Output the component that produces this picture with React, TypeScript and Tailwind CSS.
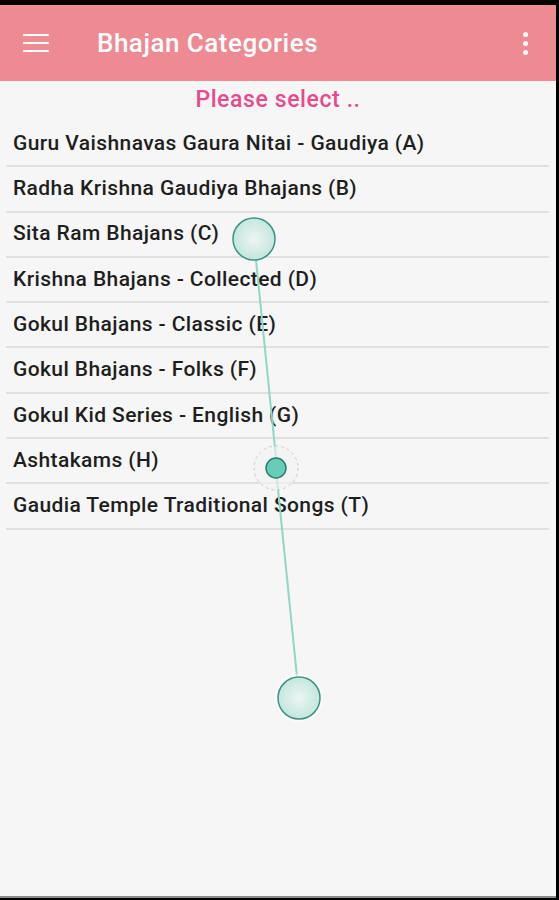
const categories = [
  "Guru Vaishnavas Gaura Nitai - Gaudiya (A)",
  "Radha Krishna Gaudiya Bhajans (B)",
  "Sita Ram Bhajans (C)",
  "Krishna Bhajans - Collected (D)",
  "Gokul Bhajans - Classic (E)",
  "Gokul Bhajans - Folks (F)",
  "Gokul Kid Series - English (G)",
  "Ashtakams (H)",
  "Gaudia Temple Traditional Songs (T)",
];

// touch trail drawn over the list (screen recording overlay)
function TouchTrail() {
  return (
    <svg className="absolute inset-0 pointer-events-none" width="559" height="900" viewBox="0 0 559 900">
      <defs>
        <radialGradient id="tap" cx="50%" cy="50%" r="50%">
          <stop offset="0%" stopColor="#eef5f3" />
          <stop offset="100%" stopColor="#c4e6de" />
        </radialGradient>
      </defs>
      <line x1="256" y1="260" x2="276" y2="458" stroke="#8fd6c6" strokeWidth="2" />
      <line x1="277" y1="479" x2="297" y2="677" stroke="#8fd6c6" strokeWidth="2" />
      <circle cx="254" cy="239" r="21" fill="url(#tap)" stroke="#3d9383" strokeWidth="1.5" />
      <circle cx="276" cy="468" r="22" fill="#f1f3f2" fillOpacity="0.6" stroke="#c8cccb" strokeWidth="1" strokeDasharray="3 3" />
      <circle cx="276" cy="468" r="10" fill="#67cdb9" stroke="#2d7d6d" strokeWidth="1.5" />
      <circle cx="299" cy="698" r="24" fill="#ffffff" fillOpacity="0.6" />
      <circle cx="299" cy="698" r="21" fill="url(#tap)" stroke="#3d9383" strokeWidth="1.5" />
    </svg>
  );
}

export default function App() {
  return (
    <div className="relative w-[559px] h-[900px] bg-black overflow-hidden" style={{ fontFamily: "Roboto, 'Noto Sans', sans-serif" }}>
      <div className="w-[556px] h-[893px] mt-[5px] bg-[#f6f6f6] border-b-2 border-[#8a8a8a]">
        <header className="h-[76px] bg-[#ee8a92] flex items-center text-white">
          <div className="ml-[23px] w-[26px] flex flex-col gap-[5.5px]">
            <span className="h-[2.5px] bg-white rounded-sm" />
            <span className="h-[2.5px] bg-white rounded-sm" />
            <span className="h-[2.5px] bg-white rounded-sm" />
          </div>
          <h1 className="ml-[48px] text-[26px] font-medium tracking-[0.5px] leading-none">Bhajan Categories</h1>
          <div className="ml-auto mr-[28px] flex flex-col gap-[4px] items-center">
            <span className="w-[5px] h-[5px] rounded-full bg-white" />
            <span className="w-[5px] h-[5px] rounded-full bg-white" />
            <span className="w-[5px] h-[5px] rounded-full bg-white" />
          </div>
        </header>
        <p className="text-center text-[#e94a8c] text-[23px] font-medium tracking-[0.6px] mt-[4px] leading-[30px]">Please select ..</p>
        <ul className="pl-[6px] pr-[7px] mt-[7px]">
          {categories.map((c) => (
            <li key={c} className="h-[45.3px] border-b-2 border-[#e0e0e0] flex items-center pl-[7px] text-[21px] font-medium tracking-[0.4px] text-[#1e1e1e]">
              {c}
            </li>
          ))}
        </ul>
      </div>
      <TouchTrail />
    </div>
  );
}
